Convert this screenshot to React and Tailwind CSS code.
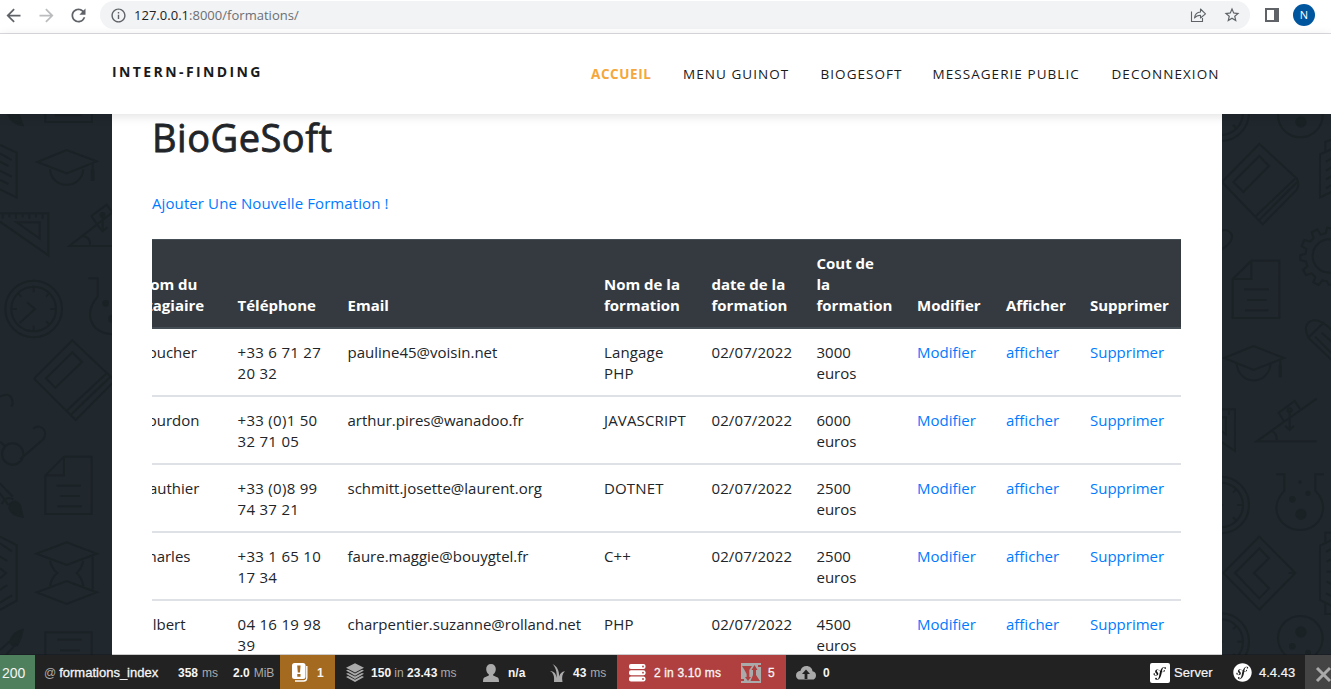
import React from "react";
import { MdArrowBack, MdArrowForward, MdRefresh, MdInfoOutline, MdStarBorder } from "react-icons/md";
import { FaSymfony } from "react-icons/fa";

const rows = [
  ["Boucher", ["+33 6 71 27", "20 32"], "pauline45@voisin.net", ["Langage", "PHP"], "3000"],
  ["Bourdon", ["+33 (0)1 50", "32 71 05"], "arthur.pires@wanadoo.fr", ["JAVASCRIPT"], "6000"],
  ["Gauthier", ["+33 (0)8 99", "74 37 21"], "schmitt.josette@laurent.org", ["DOTNET"], "2500"],
  ["Charles", ["+33 1 65 10", "17 34"], "faure.maggie@bouygtel.fr", ["C++"], "2500"],
  ["Gilbert", ["04 16 19 98", "39"], "charpentier.suzanne@rolland.net", ["PHP"], "4500"],
];

function Lines({ items }) {
  return items.map((t) => (
    <span key={t} className="block">
      {t}
    </span>
  ));
}

function BrowserBar() {
  return (
    <div className="flex h-[34px] shrink-0 items-start border-b border-[#dadce0] bg-white font-['Open_Sans',sans-serif]">
      <div className="flex h-[30px] w-[100px] items-center pl-[3px] text-[#5f6368]">
        <MdArrowBack size={21} />
        <MdArrowForward size={21} className="ml-3 text-[#babcbe]" />
        <MdRefresh size={21} className="ml-[11px]" />
      </div>
      <div className="mt-px flex h-7 w-[1150px] items-center rounded-full bg-[#f1f3f4] pl-[10px]">
        <MdInfoOutline size={17} className="text-[#5f6368]" />
        <span className="ml-[7px] pt-px text-[13px] tracking-[0.02px] text-[#6b6f73]">
          <span className="text-[#202124]">127.0.0.1</span>:8000/formations/
        </span>
        <svg className="mr-4 ml-auto" width="17" height="16" viewBox="0 0 17 16" fill="none" stroke="#5f6368" strokeWidth="1.1">
          <path d="M1.5 4.5V14.5H12.5V11" />
          <path d="M4.5 11C5 7 7 5.2 10.5 5V2L15.5 6.8L10.5 11V8.2C8 8.2 6 9 4.5 11Z" strokeLinejoin="round" />
        </svg>
        <MdStarBorder size={18} className="mr-[9px] text-[#5f6368]" />
      </div>
      <div className="flex h-[30px] items-center pl-[15px]">
        <svg width="14" height="14" viewBox="0 0 14 14">
          <path fill="#5f6368" fillRule="evenodd" d="M0 0H14V14H0ZM2 2V12H9V2Z" />
        </svg>
        <div className="ml-[14px] flex size-[22px] items-center justify-center rounded-full bg-[#00569e] text-[11px] text-white">N</div>
      </div>
    </div>
  );
}

function NavBar() {
  return (
    <nav className="relative z-10 flex h-20 shrink-0 items-center bg-white pl-28 font-['Open_Sans',sans-serif] uppercase shadow-[0_2px_10px_rgba(0,0,0,0.12)]">
      <div className="w-[479px] pb-1.5 text-[14px] font-bold tracking-[2.4px] text-[#1a1a1a]">Intern-Finding</div>
      <div className="flex pt-px text-[13.5px] tracking-[1.05px] whitespace-nowrap text-[#1a1a1a]">
        <a className="w-[92px] text-[13.5px] font-bold tracking-[0.6px] text-[#f5a73b]">Accueil</a>
        <a className="w-[137.5px]">Menu Guinot</a>
        <a className="w-28">Biogesoft</a>
        <a className="w-[179px]">Messagerie Public</a>
        <a>Deconnexion</a>
      </div>
    </nav>
  );
}

function Clock({ x, y }) {
  return (
    <g transform={`translate(${x} ${y})`}>
      <circle r="85" />
      <circle r="67" />
      <path d="M-20-20L4 0L-42 42M0-65V-50M0 65V50M-65 0H-50M65 0H50M-46-46L-37-37M46-46L37-37M46 46L37 37" />
    </g>
  );
}

function LeftPattern() {
  return (
    <svg className="w-28 shrink-0" width="112" height="541" fill="none" stroke="#1b2226" strokeWidth="6">
      <g transform="translate(0 -4) scale(0.33333)">
        <path d="M20 0Q30 40 68 46Q60 20 50 0Z" fill="#1b2226" />
        <path d="M136 0V36H276V0M165 16H245" />
        <path d="M0 105L50 128V262L0 238M0 130L35 150M0 155L25 168M0 182L35 200M0 210L25 222" />
        <path d="M112 156L200 120L290 154L200 190ZM150 178C155 240 245 240 250 178M278 160V212" />
        <path d="M278 178V212" strokeWidth="11" />
        <path d="M0 310H145V436L0 335M50 337H119V386ZM8 313V326M28 313V322M48 313V326M68 313V322M88 313V326M108 313V322M128 313V326" />
        <path d="M340 408H208L336 308M248 378Q272 380 270 408M274 318L320 284L345 318M274 318L296 350M308 312V360M296 350L308 364L322 352" />
        <circle cx="308" cy="315" r="6" />
        <Clock x={101} y={597} />
        <path d="M265 505H293V560C250 610 270 670 340 673" />
        <circle cx="317" cy="580" r="7" fill="#1b2226" />
        <circle cx="337" cy="626" r="9" fill="#1b2226" />
        <path d="M102 806L217 691L345 812M102 806L227 930L345 812M217 727L246 756L166 833L138 805ZM200 902L320 790M212 915L332 800M227 900L310 820" />
        <path d="M0 860Q36 842 38 880L34 890M0 995L15 1008M60 1048L130 988Q145 960 118 950Q110 948 100 956" />
        <circle cx="38" cy="1032" r="32" />
      </g>
      <g transform="translate(0 266) scale(0.33333)">
        <path d="M136 286L192 230H275V402H136ZM136 286H192V230M170 317H243M180 348H240M172 379H245" />
        <path d="M0 310L38 350M0 340L25 375M5 372Q20 345 40 358" />
        <path d="M30 372Q45 355 60 375L68 410Q35 405 28 385Z" fill="#1b2226" />
        <path d="M0 470L50 495V662L0 690M0 490L36 514M0 530L22 543M0 565L18 579L0 595M0 630L22 615M0 668L36 646" />
        <path d="M110 521L200 487L290 521L200 555ZM110 637L200 603L290 637L200 672ZM150 542Q155 565 172 579Q155 592 150 618M250 542Q245 565 230 579Q245 592 250 618M278 530V628" />
        <path d="M30 785Q40 755 68 750Q64 775 52 795Q35 800 30 785Z" fill="#1b2226" />
        <path d="M0 810L28 785M18 825L50 790M136 830V757H275V830M172 779H245M180 811H240" />
      </g>
    </svg>
  );
}

function RightPattern() {
  return (
    <svg className="w-[109px] shrink-0" width="109" height="541" fill="none" stroke="#1b2226" strokeWidth="6">
      <g transform="translate(-42 -4) scale(0.33333)">
        <Clock x={122} y={8} />
        <circle cx="361" cy="15" r="67" />
        <circle cx="363" cy="36" r="14" fill="#1b2226" />
        <path d="M126 216L238 102L350 205Q360 222 350 240L248 343ZM238 138L267 168L190 246L160 216ZM226 320L345 206M236 332L352 216M250 318L330 236" />
        <path d="M460 115L420 133V262L460 243M436 125V95L460 88M438 155L460 143M438 182L460 170M438 208L460 196M438 235L460 222" />
        <path d="M100 375Q140 345 156 375Q160 395 126 418" />
        <circle cx="448" cy="438" r="50" />
        <path d="M460 356L441 353L438 369L422 374L412 358L395 367L401 384L391 395L373 390L365 408L379 417L377 431L361 436V450L378 455L382 469L369 480L378 495L395 490L406 501L400 517L416 525L427 511L441 514L446 524H460" />
        <path d="M158 507L214 452H298V624H158ZM158 507H214V452M192 538H267M202 570H260M195 601H265" />
        <path d="M460 755L385 683Q365 640 400 631Q425 628 460 665M385 683L432 637M405 680L460 735M425 668L460 700" />
        <path d="M132 744L221 708L312 744L221 780ZM170 762C178 828 264 828 272 762M301 748V800" />
        <path d="M301 766V802" strokeWidth="10" />
      </g>
      <g transform="translate(-42 266) scale(0.33333)">
        <path d="M120 88H165V213L120 183M120 112H138V163L120 150M147 92V104" />
        <path d="M410 56L230 184H410M272 152Q292 156 290 184M312 124L296 98L344 63L361 88M329 90V150M316 138L329 150L342 138" />
        <circle cx="329" cy="91" r="6" />
        <Clock x={122} y={375} />
        <path d="M289 283H313V332C260 390 305 450 361 450C420 450 455 380 406 332V283H432" />
        <circle cx="337" cy="358" r="7" fill="#1b2226" />
        <circle cx="384" cy="340" r="5" fill="#1b2226" />
        <circle cx="360" cy="306" r="2" fill="#1b2226" />
        <circle cx="363" cy="403" r="14" fill="#1b2226" />
        <path d="M130 579L238 470L346 579L238 689ZM165 579L238 505L267 535L222 579L267 625L238 655ZM326 579H346" />
        <path d="M460 478L420 497V660L460 680M436 488V458H460M436 670V702H460M438 515L460 505M440 545L460 535M440 575H460M440 605L460 615M438 640L460 650" />
        <Clock x={122} y={785} />
        <circle cx="361" cy="775" r="67" />
        <circle cx="363" cy="756" r="14" fill="#1b2226" />
        <circle cx="337" cy="799" r="7" fill="#1b2226" />
        <circle cx="384" cy="818" r="6" fill="#1b2226" />
      </g>
    </svg>
  );
}

function TrainingTable() {
  return (
    <div className="mt-[24px] flex w-[1029px] justify-end overflow-hidden">
      <table className="w-[1055px] shrink-0 table-fixed border-collapse text-left text-[15px] leading-[21px] text-[#212529] [&_td]:px-3 [&_td]:pt-[13px] [&_td]:pb-[11px] [&_td]:align-top [&_td]:whitespace-nowrap [&_th]:px-3 [&_th]:pt-[10px] [&_th]:pb-[11px] [&_th]:align-bottom [&_th]:whitespace-nowrap">
        <colgroup>
          <col className="w-[99.5px]" />
          <col className="w-[110px]" />
          <col className="w-[256.5px]" />
          <col className="w-[107.5px]" />
          <col className="w-[105px]" />
          <col className="w-[100.5px]" />
          <col className="w-[89px]" />
          <col className="w-[84px]" />
          <col className="w-[103px]" />
        </colgroup>
        <thead>
          <tr className="h-[88px] border-t border-b-2 border-t-[#454d55] border-b-[#454d55] bg-[#343a40] font-bold text-white">
            <th><Lines items={["Nom du", "Stagiaire"]} /></th>
            <th>Téléphone</th>
            <th>Email</th>
            <th><Lines items={["Nom de la", "formation"]} /></th>
            <th><Lines items={["date de la", "formation"]} /></th>
            <th><Lines items={["Cout de", "la", "formation"]} /></th>
            <th>Modifier</th>
            <th>Afficher</th>
            <th>Supprimer</th>
          </tr>
        </thead>
        <tbody>
          {rows.map(([name, phone, mail, course, cost]) => (
            <tr key={name} className="h-[68px] border-b-2 border-[#dee2e6]">
              <td>{name}</td>
              <td className="tracking-[0.3px]"><Lines items={phone} /></td>
              <td>{mail}</td>
              <td className="tracking-[0.15px]"><Lines items={course} /></td>
              <td className="tracking-[0.1px]">02/07/2022</td>
              <td><Lines items={[cost, "euros"]} /></td>
              <td className="text-[#007bff]">Modifier</td>
              <td className="text-[#007bff]">afficher</td>
              <td className="text-[#007bff]">Supprimer</td>
            </tr>
          ))}
        </tbody>
      </table>
    </div>
  );
}

const Dim = ({ children }) => <span className="text-[#aaa]">{children}</span>;

function DebugToolbar() {
  return (
    <footer className="relative z-10 flex h-[34px] shrink-0 items-stretch bg-[#222] font-['Liberation_Sans',Arial,sans-serif] text-[13px] whitespace-nowrap text-[#f5f5f5] shadow-[0_-1px_0_rgba(0,0,0,0.2)] [&>div]:flex [&>div]:shrink-0 [&>div]:items-center">
      <div className="w-[35px] bg-[#4f805d] pt-[3px] pl-0.5 text-[14px]">200</div>
      <div className="w-[143px] gap-[3px] pt-px pl-[9px]">
        <span className="text-[12px] text-[#aaa]">@</span>
        <span className="[-webkit-text-stroke:0.3px]">formations_index</span>
      </div>
      <div className="w-[55px] gap-1 pt-px text-[12px]"><b className="font-semibold">358</b><Dim>ms</Dim></div>
      <div className="w-[47px] gap-1 pt-px text-[12px]"><b className="font-semibold">2.0</b><Dim>MiB</Dim></div>
      <div className="w-[55px] bg-[#a46a1f] pl-3">
        <svg width="16" height="19" viewBox="0 0 16 19">
          <path fill="none" stroke="#fff" strokeWidth="1.4" d="M14.8 3V14.5Q14.8 18 11.5 18H3" />
          <rect width="13.5" height="16" rx="2.5" fill="#fff" />
          <path fill="#a46a1f" d="M5.2 2.5H8.6L8 9.5H5.8ZM5.3 11H8.5V13.8H5.3Z" />
        </svg>
        <b className="ml-[9px] pt-px text-[12px]">1</b>
      </div>
      <div className="w-[148px] gap-[3px] pt-px pl-[11px] text-[12px] tracking-[0.1px]">
        <svg className="mr-[4px]" width="18" height="19" viewBox="0 0 18 19" fill="#aaa">
          <path d="M9 .3L18 4.8L9 9.5L0 4.8Z" />
          <path d="M0 7.6L2 6.7L9 10.4L16 6.7L18 7.6L9 12.7ZM0 10.8L2 9.9L9 13.6L16 9.9L18 10.8L9 15.9ZM0 14L2 13.1L9 16.8L16 13.1L18 14L9 19Z" />
        </svg>
        <b>150</b><Dim>in</Dim><b>23.43</b><Dim>ms</Dim>
      </div>
      <div className="w-[67px] pt-px text-[12px]">
        <svg className="mr-[9px]" width="16" height="18" viewBox="0 0 16 18" fill="#aaa">
          <path d="M8 0C5 0 3.2 2 3.2 5C3.2 7.5 4.3 9.3 5.8 10.3V11.5L1.3 13.4Q0 14 0 18H16Q16 14 14.7 13.4L10.2 11.5V10.3C11.7 9.3 12.8 7.5 12.8 5C12.8 2 11 0 8 0Z" />
        </svg>
        <b>n/a</b>
      </div>
      <div className="w-[67px] gap-1 pt-px text-[12px]">
        <svg className="mr-[4px]" width="15" height="19" viewBox="0 0 15 19" fill="#aaa">
          <path d="M4 19C4.5 13 3.5 9.7 0 8C5 8.2 6.2 11.8 6.6 15C7.2 9 5.3 3.5 2.4 1C7.5 3.5 9.3 8 9.1 13.5C10 10.5 11.5 8.5 15 8.2C12.3 10.5 11.6 14 12.5 19Z" />
        </svg>
        <b>43</b><Dim>ms</Dim>
      </div>
      <div className="w-[169px] bg-[#b04040] pt-px pl-[12px] text-[12px]">
        <svg className="mr-2" width="17" height="18" viewBox="0 0 17 18">
          <g fill="#fff"><rect width="16.5" height="5" rx="2" /><rect y="6.2" width="16.5" height="5" rx="2" /><rect y="12.5" width="16.5" height="5" rx="2" /></g>
          <g fill="#b04040"><circle cx="14" cy="2.5" r=".9" /><circle cx="14" cy="8.7" r=".9" /><circle cx="14" cy="15" r=".9" /></g>
        </svg>
        <span className="w-[67px] tracking-[0.15px] [-webkit-text-stroke:0.3px]">2 in 3.10 ms</span>
        <svg className="mr-[7px] ml-5" width="20" height="20" viewBox="0 0 20 20">
          <rect width="20" height="20" fill="#aaa" />
          <path fill="#b04040" d="M1 3H11L8.3 7V14H10L7 18L4 14H5.6V11L3.5 7ZM0 16H3V18H0ZM19 18H9.5L12 12V7H10.5L13.5 2L16.5 7H15V12ZM17 2H20V4H17Z" />
        </svg>
        <span className="[-webkit-text-stroke:0.3px]">5</span>
      </div>
      <div className="w-[364px] pt-px pl-2.5 text-[12px]">
        <svg className="mr-[7px]" width="20" height="14" viewBox="0 0 20 14">
          <path fill="#aaa" d="M16.5 5.2C16.3 2.2 13.7 0 10.5 0C7.6 0 5 1.8 4.5 4.8C1.8 5 0 6.8 0 9.4C0 12 1.8 13.6 4.5 13.6H16C18.4 13.6 20 11.8 20 9.4C20 7.1 18.6 5.5 16.5 5.2Z" />
          <path fill="#222" d="M10 3.5L14 8H11.4V13H8.6V8H6Z" />
        </svg>
        <b>0</b>
      </div>
      <div className="w-[83px] gap-1 pt-px">
        <svg width="20" height="20" viewBox="0 0 20 20">
          <rect width="20" height="20" rx="2" fill="#fff" />
          <circle cx="10" cy="10" r="8.5" fill="#111" />
          <FaSymfony x="0" y="0" size={20} color="#fff" />
        </svg>
        <span className="tracking-[0.05px] [-webkit-text-stroke:0.2px]">Server</span>
      </div>
      <div className="w-[72px] pt-px">
        <FaSymfony size={19} color="#fff" />
        <span className="ml-[7px] [-webkit-text-stroke:0.2px]">4.4.43</span>
      </div>
      <div className="flex-1 justify-end overflow-hidden bg-[#444]">
        <svg width="16" height="34" viewBox="0 0 16 34" fill="none" stroke="#aaa" strokeWidth="3">
          <path d="M2 13L15 26M15 13L2 26" />
        </svg>
      </div>
    </footer>
  );
}

export default function App() {
  return (
    <div className="flex h-[689px] w-[1331px] flex-col overflow-hidden bg-[#20272d]">
      <BrowserBar />
      <NavBar />
      <div className="flex h-[541px] shrink-0 overflow-hidden">
        <LeftPattern />
        <main className="w-[1110px] bg-white px-10 font-['Open_Sans',sans-serif]">
          <h1 className="h-12 text-[38px] leading-[46px] tracking-[0.5px] text-[#212529] [-webkit-text-stroke:0.8px]">BioGeSoft</h1>
          <a className="mt-[29px] block h-6 text-[15px] leading-[25px] tracking-[0.1px] text-[#007bff]">Ajouter Une Nouvelle Formation !</a>
          <TrainingTable />
        </main>
        <RightPattern />
      </div>
      <DebugToolbar />
    </div>
  );
}
